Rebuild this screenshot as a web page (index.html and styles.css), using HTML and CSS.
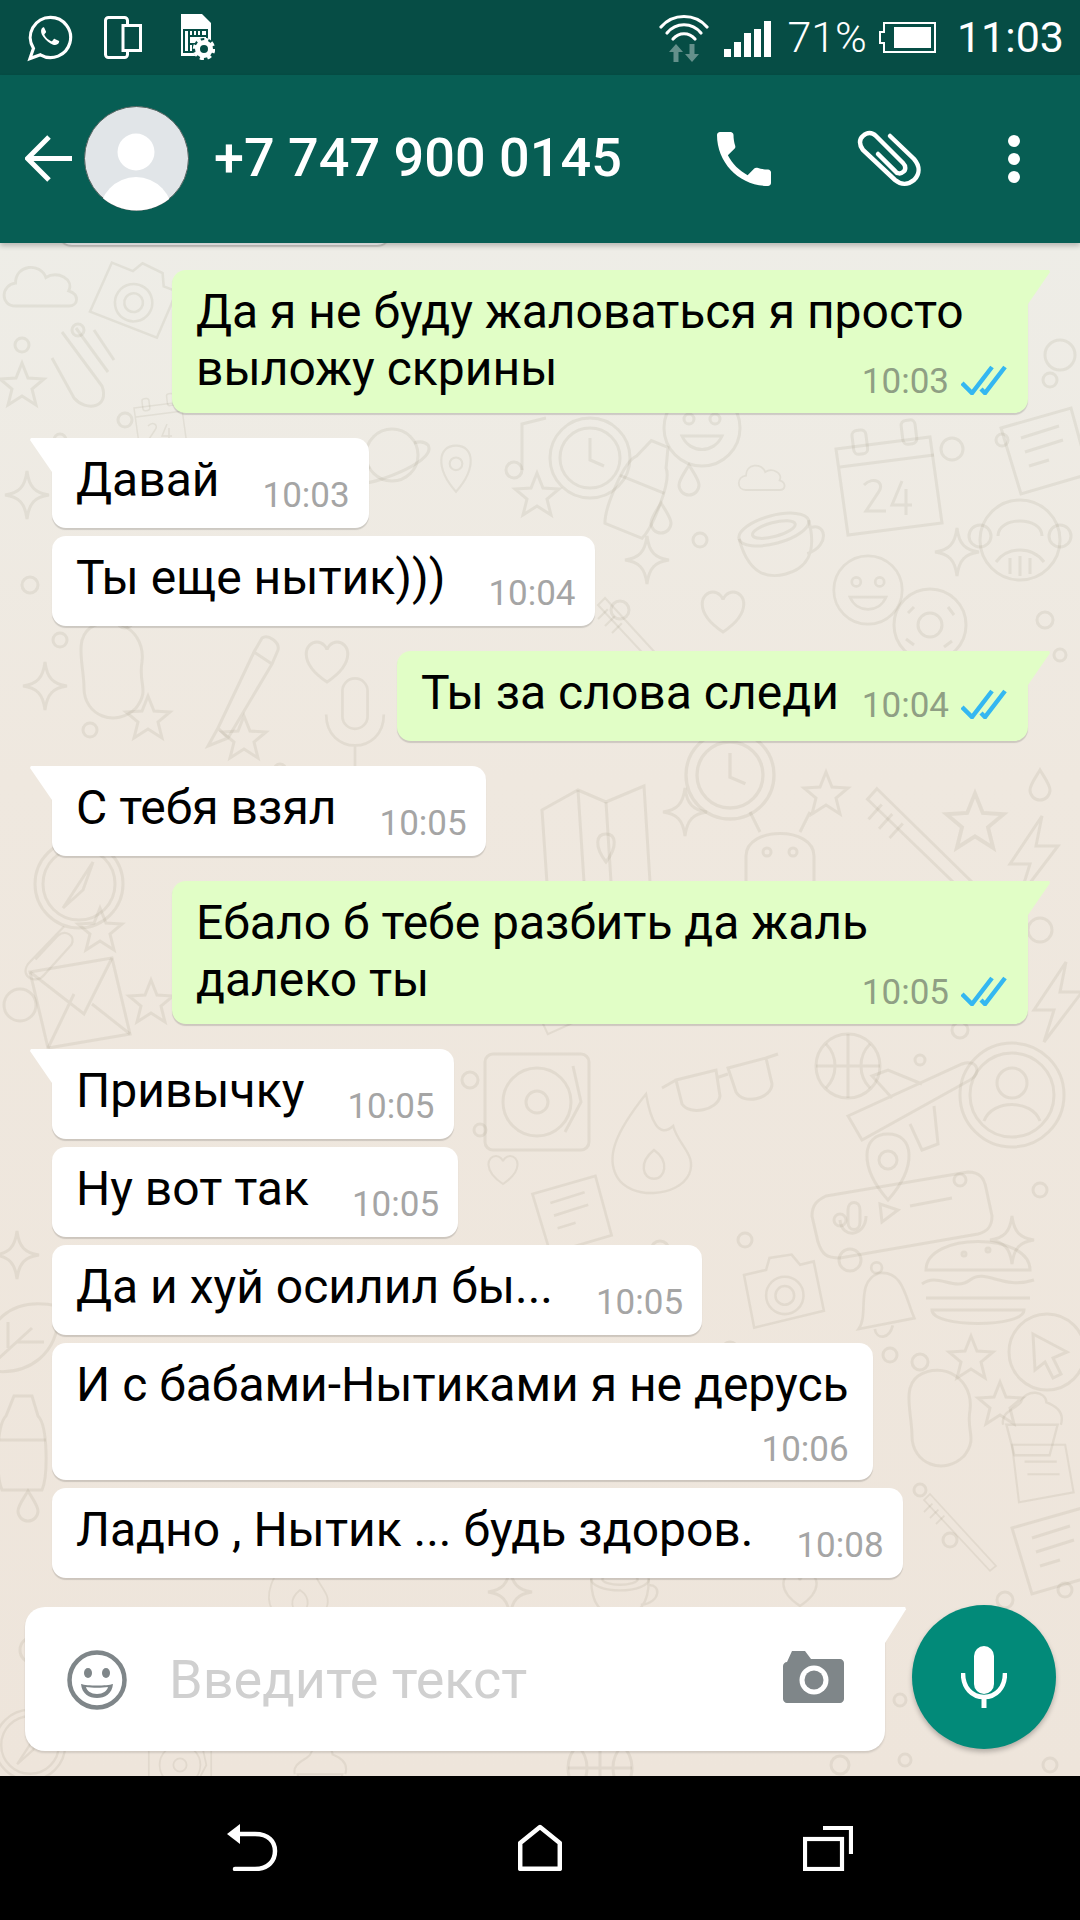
FILE: index.html
```html
<!DOCTYPE html>
<html lang="ru">
<head>
    <meta charset="UTF-8">
    <title>WhatsApp</title>
    <link rel="stylesheet" href="styles.css">
</head>
<body>
<div class="screen">

    <!-- status bar -->
    <div class="statusbar">
        <svg class="st-whatsapp" viewBox="0 0 48 48">
            <path d="M24 3a20.5 20.5 0 1 1-10.3 38.2L3 45l3.6-10.4A20.5 20.5 0 0 1 24 3z" fill="none" stroke="#fff" stroke-width="3.2"/>
            <path d="M17 13c-.7 0-1.6.5-2.2 1.7-.9 1.8-.6 4.6 1.8 7.9 3 4 6.6 7 10 8.2 2.7.9 5-.1 5.9-1.9.4-.9.4-1.5.3-1.8l-4.4-2.2c-.4-.2-.7-.1-1 .2l-1.6 2c-.3.3-.6.4-1 .2-3-1.3-5.5-3.4-7-6.3-.2-.4-.1-.7.2-1l1.3-1.6c.2-.3.3-.6.1-1l-1.9-4.1c-.2-.3-.4-.3-1-.3z" fill="#fff"/>
        </svg>
        <svg class="st-phones" viewBox="0 0 38 43">
            <rect x="1.5" y="1.5" width="22" height="40" rx="3" fill="none" stroke="#fff" stroke-width="3"/>
            <rect x="19" y="9.5" width="17.500" height="25" fill="#064d45" stroke="#fff" stroke-width="3"/>
        </svg>
        <svg class="st-sim" viewBox="0 0 36 46">
            <path d="M2 0h21l9 9v33H2z" fill="#fff"/>
            <path d="M5 16h23v22H5z" fill="none" stroke="#064d45" stroke-width="2"/>
            <path d="M10 16v22M10 22h18M14 16v6M18 16v6M22 16v6M10 30h8M14 30v8" stroke="#064d45" stroke-width="2" fill="none"/>
            <circle cx="25" cy="35" r="11" fill="#064d45"/>
            <circle cx="25" cy="35" r="6.500" fill="none" stroke="#fff" stroke-width="5"/>
            <circle cx="25" cy="35" r="9.500" fill="none" stroke="#fff" stroke-width="3.500" stroke-dasharray="4 3.460"/>
        </svg>
        <div class="st-right">
            <svg class="st-wifi" viewBox="0 0 50 50">
                <g fill="none" stroke="#fff" stroke-width="3.200" stroke-linecap="round">
                    <path d="M2 14C14 0 36 0 48 14"/>
                    <path d="M8 20C17 9 33 9 42 20"/>
                    <path d="M14 26C20 19 30 19 36 26"/>
                </g>
                <path d="M17 31l7 8h-4.500v10h-5V39H10zM33 49l7-8h-4.500V31h-5v10H26z" fill="#fff" opacity=".38"/>
            </svg>
            <svg class="st-signal" viewBox="0 0 47 36">
                <rect x="0" y="28" width="7" height="8" fill="#fff"/>
                <rect x="10" y="21" width="7" height="15" fill="#fff"/>
                <rect x="20" y="12" width="7" height="24" fill="#fff"/>
                <rect x="30" y="8" width="7" height="28" fill="#fff"/>
                <rect x="40" y="0" width="7" height="36" fill="#fff"/>
            </svg>
            <span class="st-percent">71%</span>
            <svg class="st-battery" viewBox="0 0 57 31">
                <path d="M5 1h51v29H5v-9H1V10h4z" fill="none" stroke="#fff" stroke-width="2"/>
                <rect x="15" y="5" width="37" height="21" fill="#fff"/>
            </svg>
            <span class="st-time">11:03</span>
        </div>
    </div>

    <!-- app bar -->
    <div class="appbar">
        <svg class="back-icon" viewBox="0 0 47 47">
            <path d="M47 23.500H4M24 2L2.500 23.500 24 45" fill="none" stroke="#fff" stroke-width="5"/>
        </svg>
        <svg class="avatar" viewBox="0 0 105 105">
            <clipPath id="avatarClip"><circle cx="52.500" cy="52.500" r="52"/></clipPath>
            <circle cx="52.500" cy="52.500" r="52" fill="#e1e5e8" stroke="#4f5f5c" stroke-width="1"/>
            <g clip-path="url(#avatarClip)" fill="#fff">
                <circle cx="52" cy="46" r="18.500"/>
                <ellipse cx="52" cy="109" rx="37" ry="38"/>
            </g>
        </svg>
        <h1 class="contact">+7 747 900 0145</h1>
        <svg class="call-icon" viewBox="0 0 24 24">
            <path fill="#fff" d="M6.620 10.790c1.440 2.830 3.760 5.140 6.590 6.590l2.200-2.200c.27-.27.67-.36 1.020-.24 1.120.37 2.330.57 3.570.57.55 0 1 .45 1 1V20c0 .55-.45 1-1 1-9.390 0-17-7.610-17-17 0-.55.45-1 1-1h3.500c.55 0 1 .45 1 1 0 1.250.2 2.450.57 3.570.11.35.03.74-.25 1.020l-2.200 2.200z"/>
        </svg>
        <svg class="clip-icon" viewBox="0 0 64 58">
            <path d="M33 6l24 23c6 7 6 15 0 21-6 5-13 5-19 0L6 20C2 15 2 9 6 6c4-4 9-4 13 0l27 27c3 3 3 7 0 9-2 2-6 2-8-1L21 24" fill="none" stroke="#fff" stroke-width="4.500" stroke-linecap="round"/>
        </svg>
        <div class="dots"><i></i><i></i><i></i></div>
    </div>

    <!-- chat -->
    <div class="chat">
        <svg class="wallpaper" viewBox="0 243 1080 1533">
            <defs>
                <path id="d-star" d="M0-22L6-7 22-6 10 4 14 20 0 11-14 20-10 4-22-6-6-7z"/>
                <path id="d-spark" d="M0-24C2-8 8-2 22 0 8 2 2 8 0 24-2 8-8 2-22 0-8-2-2-8 0-24z"/>
                <path id="d-heart" d="M0 20C-30 0-22-20-10-20-4-20 0-14 0-12 0-14 4-20 10-20 22-20 30 0 0 20z"/>
                <path id="d-drop" d="M0-15C6-5 10 0 10 5A10 10 0 0 1-10 5C-10 0-6-5 0-15z"/>
                <path id="d-cloud" d="M-30 20C-46 20-46-2-30-4-30-24-4-26 2-10 14-18 32-8 26 4 38 8 36 20 26 20z"/>
                <g id="d-face"><circle r="38"/><circle cx="-13" cy="-9" r="5"/><circle cx="13" cy="-9" r="5"/><path d="M-20 8C-12 26 12 26 20 8z"/></g>
                <g id="d-clock"><circle r="40"/><circle r="30"/><path d="M0-20V2L14 8"/></g>
                <g id="d-vinyl"><rect x="-52" y="-48" width="104" height="96" rx="8"/><circle r="34"/><circle r="11"/><path d="M36-36L44 0 28 30"/></g>
                <g id="d-calendar"><path d="M-52-34L42-46 54 40-40 52z"/><path d="M-48-16L46-28"/><rect x="-30" y="-56" width="14" height="24" rx="5" transform="rotate(-7)"/><rect x="20" y="-60" width="14" height="24" rx="5" transform="rotate(-7)"/><path d="M-24 2C-14-8-2 0-10 10L-22 28H-2M14-2L4 22H24M18 6V32"/></g>
                <g id="d-cup"><ellipse cx="0" cy="-16" rx="36" ry="14"/><path d="M-36-16C-36 20-20 30 0 30S36 20 36-16M34-8C52-12 52 14 26 16"/><ellipse cx="0" cy="-16" rx="22" ry="7"/></g>
                <g id="d-monkey"><circle r="40"/><circle cx="-40" cy="-4" r="11"/><circle cx="40" cy="-4" r="11"/><path d="M-22-4C-22-24 22-24 22-4M-24 22C-12 6 12 6 24 22M-10 18V34M0 16V36M10 18V34"/></g>
                <g id="d-pencil"><path d="M-16 40L-26 58-6 50 38-24 20-36zM20-36L28-50C34-54 46-46 44-38L38-24M-16 40L-6 50"/></g>
                <g id="d-mic"><rect x="-14" y="-44" width="28" height="56" rx="14"/><path d="M-32-4C-32 42 32 42 32-4M0 32V60M-18 60H18"/></g>
                <g id="d-map"><path d="M-50-28L-14-48 14-36 52-52 58 44 20 60-8 44-44 60z"/><path d="M-14-48L-8 44M14-36L20 60"/><path d="M14 24C2 8 4-4 14-4S26 8 14 24z"/></g>
                <g id="d-android"><path d="M-34 26V0C-34-30 34-30 34 0V26C34 36 26 40 20 40H-20C-26 40-34 36-34 26zM-20-24L-30-44M20-24L30-44"/><circle cx="-13" cy="-4" r="4"/><circle cx="13" cy="-4" r="4"/></g>
                <g id="d-brush"><path d="M-50-60L60 60 50 68-60-50z"/><path d="M-46-44L-60-30M-36-34L-50-20M-26-24L-40-10"/></g>
                <g id="d-compass"><circle r="44"/><circle r="36"/><path d="M14-22L-16 24 4 6z"/></g>
                <g id="d-envelope"><path d="M-50-30L32-44 50 32-32 46z"/><path d="M-50-30L4 12 32-44M-32 46L-6-8M50 32L12 2"/></g>
                <g id="d-paperclip"><path d="M24-34L-24 16C-36 34-12 44-2 30L34-10C40-22 26-30 16-22L-14 10"/></g>
                <g id="d-glasses"><path d="M-46-12L-6-22-2 4C-4 18-32 24-40 12zM6-24L44-34 50-8C50 6 22 14 14 0zM-6-14L6-18M-46-12L-60-4M44-34L56-38"/></g>
                <g id="d-ball"><circle r="32"/><path d="M-32 0H32M0-32V32M-22-22C-10-10-10 10-22 22M22-22C10-10 10 10 22 22"/></g>
                <g id="d-plane"><path d="M-64 16L50-36C66-42 70-26 58-20L-50 40zM-20-2L-40-24-24-30 10-16M-2 24L10 50 26 44 22 6"/></g>
                <g id="d-person"><circle r="52"/><circle r="42"/><circle cy="-12" r="15"/><path d="M-28 26C-20 4 20 4 28 26"/></g>
                <g id="d-flame"><path d="M-10-70C-50-20-60 10-46 34-30 62 30 60 44 30 54 6 30-6 24-30 6-14-4-36-10-70z"/><path d="M0 0C-20 16-14 36 0 36S20 14 0 0z"/></g>
                <g id="d-pin"><path d="M0 34C-30 0-26-32 0-32S30 0 0 34z"/><circle cy="-6" r="9"/></g>
                <g id="d-card"><path d="M-44-20L26-40 44 26-24 46z"/><path d="M-24-10L14-22M-20 4L18-8M-16 18L4 12"/></g>
                <g id="d-voice"><path d="M-76-26L66-50C78-50 82-44 84-34L90-6C90 6 84 10 76 12L-62 36C-76 36-80 32-84 20L-90-6C-90-18-84-22-76-26z"/><path d="M-54-12C-54-22-42-22-42-12V0C-42 10-54 10-54 0zM-62-2C-60 18-36 14-36-6M-22-18L-4-12-20 0zM8-16L50-24"/></g>
                <g id="d-camera"><path d="M-40-20L-14-26-10-40 16-44 26-32 42-36 54 22-28 42z"/><circle cx="8" cy="4" r="22"/><circle cx="8" cy="4" r="11"/></g>
                <g id="d-burger"><path d="M-52-8C-52-46 52-46 52-8z"/><path d="M-56 6C-40-6-24 14-8 2S24 12 56 2M-52 20H52M-46 32C-46 50 46 50 46 32z"/><circle cx="-14" cy="-24" r="2"/><circle cx="10" cy="-28" r="2"/></g>
                <g id="d-bell"><path d="M-26 30C-14 14-30-22 -4-32 24-36 26-4 36 18z"/><circle cx="-6" cy="-38" r="6"/><path d="M-8 30C-6 42 8 42 12 26"/></g>
                <g id="d-cursor"><circle r="38"/><path d="M-14-18L20 0 6 6 14 22 6 26-2 10-12 18z"/></g>
                <g id="d-cake"><path d="M-32 6H32L22 44H-22zM-36 6C-40-10-20-14-14-22-8-40 18-36 18-22 34-16 40-6 36 6"/></g>
                <g id="d-blob"><path d="M-30-44C-4-60 26-40 22-10 18 12 30 18 16 36-4 56-36 44-36 16-36-6-46-32-30-44z"/></g>
                <g id="d-bottle"><path d="M-16-30L-8-50H10L16-30C26-20 26 30 20 44H-20C-26 30-26-20-16-30z"/><path d="M-24-6H24"/></g>
                <g id="d-leaf"><path d="M-36 30C-40-20-10-44 36-34 40 14 6 38-36 30zM-36 30L10-12M-14 8V-18M-6 2H22"/></g>
                <g id="d-bolt"><path d="M8-40L-24 8H-4L-14 40 24-10H2z"/></g>
                <g id="d-planet"><circle r="26"/><path d="M-22 12C-44 24-40 34-10 24S42 0 36-10C32-14 28-14 22-12"/></g>
                <g id="d-note"><path d="M-8 22V-24L16-30"/><circle cx="-16" cy="22" r="8"/></g>
                <g id="d-donut"><circle r="36"/><circle r="12"/><path d="M-22-12L-16-18M18-18L24-10M-24 14L-16 20M14 22L22 16"/></g>
                <g id="d-sticky"><path d="M-40-36H36L48 32-30 46z"/><path d="M-22-12H24M-18 6H28"/></g>
                <g id="d-hand"><path d="M-24-36L16 18C24 40 0 44-12 30L-34-10M-10-40L22 4M8-38L28-8"/></g>
            </defs>
            <g class="doodles">
                <use href="#d-cloud" transform="translate(44 287) scale(.95)"/>
                <use href="#d-camera" transform="translate(130 296) rotate(35) scale(.85)"/>
                <use href="#d-hand" transform="translate(86 368)"/>
                <use href="#d-star" transform="translate(22 385)"/>
                <use href="#d-calendar" transform="translate(160 425) scale(.5)"/>
                <use href="#d-planet" transform="translate(392 455)"/>
                <use href="#d-note" transform="translate(530 448)"/>
                <use href="#d-clock" transform="translate(590 458)"/>
                <use href="#d-pin" transform="translate(456 468) scale(.7)"/>
                <use href="#d-face" transform="translate(702 428)"/>
                <use href="#d-calendar" transform="translate(888 483)"/>
                <use href="#d-card" transform="translate(1045 448)"/>
                <use href="#d-monkey" transform="translate(1020 540)"/>
                <use href="#d-cup" transform="translate(778 545) rotate(-15)"/>
                <use href="#d-spark" transform="translate(647 560)"/>
                <use href="#d-spark" transform="translate(957 552)"/>
                <use href="#d-star" transform="translate(537 495)"/>
                <use href="#d-bottle" transform="translate(640 490) rotate(22)"/>
                <use href="#d-face" transform="translate(868 590) scale(.9)"/>
                <use href="#d-donut" transform="translate(930 625)"/>
                <use href="#d-drop" transform="translate(689 480)"/>
                <use href="#d-drop" transform="translate(661 518)"/>
                <use href="#d-cloud" transform="translate(764 478) scale(.6)"/>
                <use href="#d-spark" transform="translate(27 495)"/>
                <use href="#d-heart" transform="translate(723 612)"/>
                <use href="#d-brush" transform="translate(640 640) scale(.7)"/>
                <use href="#d-blob" transform="translate(120 672)"/>
                <use href="#d-spark" transform="translate(45 686)"/>
                <use href="#d-pencil" transform="translate(234 688)"/>
                <use href="#d-heart" transform="translate(327 662)"/>
                <use href="#d-star" transform="translate(148 718)"/>
                <use href="#d-star" transform="translate(244 738)"/>
                <use href="#d-mic" transform="translate(355 718) scale(.9)"/>
                <use href="#d-clock" transform="translate(730 775) scale(1.1)"/>
                <use href="#d-map" transform="translate(592 838)"/>
                <use href="#d-android" transform="translate(780 856)"/>
                <use href="#d-brush" transform="translate(930 846) rotate(-3)"/>
                <use href="#d-star" transform="translate(975 822) scale(1.3)"/>
                <use href="#d-spark" transform="translate(685 812)"/>
                <use href="#d-star" transform="translate(826 794)"/>
                <use href="#d-compass" transform="translate(79 884)"/>
                <use href="#d-paperclip" transform="translate(46 952) scale(.75)"/>
                <use href="#d-star" transform="translate(100 930)"/>
                <use href="#d-envelope" transform="translate(80 1002)"/>
                <use href="#d-star" transform="translate(151 1002)"/>
                <use href="#d-bolt" transform="translate(1034 856)"/>
                <use href="#d-bolt" transform="translate(1058 1002)"/>
                <use href="#d-drop" transform="translate(1040 785)"/>
                <use href="#d-card" transform="translate(560 1000) rotate(-8) scale(.7)"/>
                <use href="#d-vinyl" transform="translate(537 1102)"/>
                <use href="#d-glasses" transform="translate(722 1092)"/>
                <use href="#d-ball" transform="translate(848 1066)"/>
                <use href="#d-plane" transform="translate(912 1100)"/>
                <use href="#d-person" transform="translate(1012 1095)"/>
                <use href="#d-flame" transform="translate(654 1150) scale(.8)"/>
                <use href="#d-pin" transform="translate(888 1166)"/>
                <use href="#d-heart" transform="translate(503 1170) scale(.7)"/>
                <use href="#d-card" transform="translate(572 1212) scale(.9)"/>
                <use href="#d-voice" transform="translate(902 1222)"/>
                <use href="#d-spark" transform="translate(1012 1240)"/>
                <use href="#d-camera" transform="translate(778 1292) scale(.85)"/>
                <use href="#d-burger" transform="translate(978 1278)"/>
                <use href="#d-bell" transform="translate(882 1302) scale(.9)"/>
                <use href="#d-cursor" transform="translate(1047 1352)"/>
                <use href="#d-star" transform="translate(971 1358)"/>
                <use href="#d-cake" transform="translate(1032 1420) scale(.8)"/>
                <use href="#d-star" transform="translate(1000 1404)"/>
                <use href="#d-blob" transform="translate(948 1420)"/>
                <use href="#d-sticky" transform="translate(1040 1470) scale(.7)"/>
                <use href="#d-card" transform="translate(1056 1548)"/>
                <use href="#d-leaf" transform="translate(22 1340)"/>
                <use href="#d-spark" transform="translate(17 1255)"/>
                <use href="#d-bottle" transform="translate(22 1446)"/>
                <use href="#d-drop" transform="translate(28 1506)"/>
                <use href="#d-brush" transform="translate(960 1530) scale(.6)"/>
                <use href="#d-spark" transform="translate(510 1592)"/>
                <use href="#d-cup" transform="translate(620 1592) scale(.8)"/>
                <use href="#d-flame" transform="translate(300 1590) scale(.6)"/>
                <use href="#d-heart" transform="translate(800 1590) scale(.8)"/>
                <use href="#d-compass" transform="translate(30 1745) scale(.8)"/>
                <use href="#d-vinyl" transform="translate(180 1765) scale(.6)"/>
                <use href="#d-ball" transform="translate(600 1768)"/>
                <use href="#d-cake" transform="translate(320 1770) scale(.7)"/>
                <circle cx="22" cy="345" r="7"/><circle cx="78" cy="330" r="6"/><circle cx="125" cy="420" r="7"/><circle cx="60" cy="440" r="6"/>
                <circle cx="955" cy="400" r="6"/><circle cx="1050" cy="380" r="7"/><circle cx="1003" cy="360" r="5"/><circle cx="1060" cy="355" r="15"/>
                <circle cx="952" cy="449" r="11"/><circle cx="1002" cy="440" r="6"/><circle cx="1045" cy="620" r="8"/><circle cx="1060" cy="655" r="6"/>
                <circle cx="620" cy="610" r="9"/><circle cx="440" cy="560" r="7"/><circle cx="700" cy="540" r="7"/><circle cx="515" cy="590" r="10"/>
                <circle cx="30" cy="585" r="8"/><circle cx="125" cy="620" r="8"/><circle cx="210" cy="590" r="7"/><circle cx="60" cy="640" r="7"/>
                <circle cx="90" cy="730" r="7"/><circle cx="280" cy="770" r="6"/><circle cx="190" cy="780" r="12"/><circle cx="20" cy="1005" r="16"/>
                <circle cx="605" cy="938" r="6"/><circle cx="660" cy="932" r="6"/><circle cx="800" cy="940" r="10"/><circle cx="875" cy="985" r="6"/>
                <circle cx="920" cy="1060" r="5"/><circle cx="960" cy="1030" r="8"/><circle cx="1040" cy="930" r="12"/><circle cx="1000" cy="1000" r="7"/>
                <circle cx="470" cy="1080" r="8"/><circle cx="480" cy="1130" r="6"/><circle cx="660" cy="1250" r="9"/><circle cx="745" cy="1240" r="7"/>
                <circle cx="840" cy="1220" r="6"/><circle cx="850" cy="1260" r="11"/><circle cx="1040" cy="1190" r="7"/><circle cx="960" cy="1180" r="6"/>
                <circle cx="730" cy="1350" r="8"/><circle cx="780" cy="1370" r="6"/><circle cx="890" cy="1355" r="7"/><circle cx="920" cy="1362" r="8"/>
                <circle cx="950" cy="1540" r="7"/><circle cx="880" cy="1530" r="10"/><circle cx="920" cy="1490" r="6"/><circle cx="1065" cy="1590" r="7"/>
                <circle cx="33" cy="1650" r="13"/><circle cx="45" cy="1688" r="10"/><circle cx="900" cy="1700" r="6"/><circle cx="1005" cy="1600" r="8"/>
                <circle cx="1050" cy="1765" r="7"/><circle cx="840" cy="1765" r="9"/><circle cx="905" cy="1760" r="6"/>
            </g>
        </svg>

        <div class="messages">
            <div class="bubble in stub"></div>

            <div class="bubble out long group-start">
                <p class="text">Да я не буду жаловаться я просто<br>выложу скрины</p>
                <div class="meta overlap"><span class="time">10:03</span><svg class="ticks" viewBox="0 0 46 30"><path d="M1 18l10 10L31 2M20 24l4 4L44 2"/></svg></div>
            </div>

            <div class="bubble in tail group-start">
                <p class="text">Давай</p><div class="meta"><span class="time">10:03</span></div>
            </div>
            <div class="bubble in">
                <p class="text">Ты еще нытик)))</p><div class="meta"><span class="time">10:04</span></div>
            </div>

            <div class="bubble out group-start">
                <p class="text">Ты за слова следи</p>
                <div class="meta"><span class="time">10:04</span><svg class="ticks" viewBox="0 0 46 30"><path d="M1 18l10 10L31 2M20 24l4 4L44 2"/></svg></div>
            </div>

            <div class="bubble in tail group-start">
                <p class="text">С тебя взял</p><div class="meta"><span class="time">10:05</span></div>
            </div>

            <div class="bubble out long group-start">
                <p class="text">Ебало б тебе разбить да жаль<br>далеко ты</p>
                <div class="meta overlap"><span class="time">10:05</span><svg class="ticks" viewBox="0 0 46 30"><path d="M1 18l10 10L31 2M20 24l4 4L44 2"/></svg></div>
            </div>

            <div class="bubble in tail group-start">
                <p class="text">Привычку</p><div class="meta"><span class="time">10:05</span></div>
            </div>
            <div class="bubble in">
                <p class="text">Ну вот так</p><div class="meta"><span class="time">10:05</span></div>
            </div>
            <div class="bubble in">
                <p class="text">Да и хуй осилил бы...</p><div class="meta"><span class="time">10:05</span></div>
            </div>
            <div class="bubble in stacked">
                <p class="text">И с бабами-Нытиками я не дерусь</p><div class="meta"><span class="time">10:06</span></div>
            </div>
            <div class="bubble in">
                <p class="text">Ладно , Нытик ... будь здоров.</p><div class="meta"><span class="time">10:08</span></div>
            </div>
        </div>

        <div class="input-row">
            <div class="composer">
                <svg class="emoji-icon" viewBox="0 0 60 60">
                    <circle cx="30" cy="30" r="27.500" fill="none" stroke="#7f8689" stroke-width="4.500"/>
                    <ellipse cx="21" cy="23" rx="4" ry="5" fill="#7f8689"/>
                    <ellipse cx="39" cy="23" rx="4" ry="5" fill="#7f8689"/>
                    <path d="M14 34c6 2 26 2 32 0-1 10-8 14-16 14s-15-4-16-14z" fill="#7f8689"/>
                    <path d="M19 37c6 1 16 1 22 0-1 4-5 7-11 7s-10-3-11-7z" fill="#fff"/>
                </svg>
                <span class="placeholder">Введите текст</span>
                <svg class="camera-icon" viewBox="0 0 61 53">
                    <path d="M4 12L9 1h13l6 8h29c2 0 4 2 4 4v36c0 2-2 4-4 4H4c-2 0-4-2-4-4V16c0-2 2-4 4-4z" fill="#7f8689"/>
                    <circle cx="31" cy="30" r="14.500" fill="#fff"/>
                    <circle cx="31" cy="30" r="9.500" fill="#7f8689"/>
                </svg>
            </div>
            <div class="mic-button">
                <svg class="mic-icon" viewBox="0 0 46 62">
                    <rect x="13" y="0" width="20" height="48" rx="10" fill="#fff"/>
                    <path d="M2 27c0 15 9 24 21 24s21-9 21-24" fill="none" stroke="#fff" stroke-width="4.500"/>
                    <path d="M23 50v12" stroke="#fff" stroke-width="5"/>
                </svg>
            </div>
        </div>
    </div>

    <!-- nav bar -->
    <div class="navbar">
        <svg class="nav-back" viewBox="0 0 51 47">
            <path d="M0 10L13 0v20z" fill="#fff"/>
            <path d="M10 10h18c14 0 20 8 20 17s-6 18-20 18H8" fill="none" stroke="#fff" stroke-width="4.500" stroke-linecap="round"/>
        </svg>
        <svg class="nav-home" viewBox="0 0 44 47">
            <path d="M2.200 44.800V19L22 3l19.800 16v25.800z" fill="none" stroke="#fff" stroke-width="4.500" stroke-linejoin="round"/>
        </svg>
        <svg class="nav-recents" viewBox="0 0 50 47">
            <rect x="2" y="15" width="37" height="30" fill="none" stroke="#fff" stroke-width="4.200"/>
            <path d="M20 4h28v26" fill="none" stroke="#fff" stroke-width="4.200"/>
        </svg>
    </div>
</div>
</body>
</html>
```

FILE: styles.css
```css
* {
    margin: 0;
    padding: 0;
    box-sizing: border-box;
}

body {
    width: 1080px;
    height: 1920px;
    overflow: hidden;
    font-family: Roboto, "Liberation Sans", sans-serif;
    background-color: #000;
}

svg {
    display: block;
    flex: none;
}

.screen {
    display: flex;
    flex-direction: column;
    height: 1920px;
}

/* status bar */
.statusbar {
    display: flex;
    align-items: center;
    flex: none;
    height: 75px;
    padding-left: 27px;
    background-color: #064d45;
    color: #fff;
}

.st-whatsapp { width: 47px; height: 48px; }
.st-phones { width: 38px; height: 43px; margin-left: 30px; margin-top: -1px; }
.st-sim { width: 36px; height: 46px; margin-left: 37px; margin-top: -1px; }

.st-right {
    display: flex;
    align-items: center;
    margin-left: auto;
    padding-right: 16px;
}

.st-wifi { width: 50px; height: 50px; }
.st-signal { width: 47px; height: 36px; margin-left: 15px; margin-top: 2px; }

.st-percent {
    margin-left: 16px;
    font-size: 43px;
    font-weight: 300;
    line-height: 75px;
}

.st-battery { width: 57px; height: 31px; margin-left: 12px; }

.st-time {
    margin-left: 21px;
    font-size: 43px;
    font-weight: 400;
    line-height: 75px;
}

/* app bar */
.appbar {
    position: relative;
    z-index: 2;
    display: flex;
    align-items: center;
    flex: none;
    height: 168px;
    padding-left: 25px;
    background-color: #075e54;
    box-shadow: 0 3px 5px rgba(0, 0, 0, 0.22);
}

.back-icon { width: 47px; height: 47px; margin-top: -1px; }
.avatar { width: 105px; height: 105px; margin-left: 12px; margin-top: -1px; }

.contact {
    margin-left: 25px;
    margin-top: -4px;
    font-size: 54px;
    font-weight: 500;
    color: #fff;
    white-space: nowrap;
}

.call-icon { width: 72px; height: 72px; margin-left: auto; }
.clip-icon { width: 64px; height: 58px; margin-left: 77px; }

.dots {
    display: flex;
    flex-direction: column;
    gap: 6px;
    margin-left: 87px;
    margin-right: 60px;
}

.dots i {
    display: block;
    width: 12px;
    height: 12px;
    border-radius: 50%;
    background-color: #fff;
}

/* chat */
.chat {
    position: relative;
    display: flex;
    flex-direction: column;
    flex: 1;
    min-height: 0;
    overflow: hidden;
    background: linear-gradient(#eeede7 0, #efe8df 35%, #eee5db 100%);
}

.wallpaper {
    position: absolute;
    inset: 0;
    width: 1080px;
    height: 1533px;
}

.doodles {
    fill: none;
    stroke: #7d735f;
    stroke-opacity: 0.11;
    stroke-width: 3;
}

.messages {
    position: relative;
    display: flex;
    flex-direction: column;
    flex: 1;
    min-height: 0;
    padding: 0 52px;
    gap: 8px;
}

.bubble {
    position: relative;
    display: flex;
    align-items: flex-end;
    flex: none;
    width: fit-content;
    height: 90px;
    padding: 13px 19px 0 24px;
    border-radius: 14px;
    box-shadow: 0 2px 1px rgba(0, 0, 0, 0.14);
}

.bubble.in {
    align-self: flex-start;
    background-color: #fff;
}

.bubble.out {
    align-self: flex-end;
    padding-right: 21px;
    background-color: #e1fec6;
    border-top-right-radius: 0;
}

.bubble.group-start { margin-top: 17px; }

.bubble.stub {
    width: 333px;
    margin-top: -88px;
    margin-left: 6px;
}

.bubble.long {
    display: block;
    width: 856px;
    height: 143px;
}

.bubble.stacked {
    flex-direction: column;
    height: 137px;
    padding-right: 24px;
}

.bubble.stacked .meta {
    align-self: flex-end;
    margin-top: 16px;
    margin-left: 0;
}

.bubble.in.tail { border-top-left-radius: 0; }

.bubble.in.tail::before,
.bubble.out::after {
    content: "";
    position: absolute;
    top: 0;
    width: 22px;
    height: 34px;
}

.bubble.in.tail::before {
    right: 100%;
    background-color: #fff;
    clip-path: polygon(100% 0, 4% 0, 0 6%, 100% 100%);
}

.bubble.out::after {
    left: 100%;
    background-color: #e1fec6;
    clip-path: polygon(0 0, 96% 0, 100% 6%, 0 100%);
}

.text {
    align-self: flex-start;
    font-size: 48px;
    line-height: 57px;
    color: #000;
    white-space: nowrap;
}

.meta {
    display: flex;
    align-items: center;
    margin-left: 43px;
    margin-bottom: 12px;
    line-height: 41px;
}

.bubble.out .meta {
    margin-left: 23px;
    margin-bottom: 15px;
}

.bubble.out .meta.overlap {
    justify-content: flex-end;
    margin-top: -36px;
    margin-bottom: 0;
}

.time {
    font-size: 35px;
    color: #a5a5a5;
}

.out .time { color: #8f9f84; }

.ticks {
    width: 46px;
    height: 30px;
    margin-left: 12px;
    margin-bottom: 4px;
    fill: none;
    stroke: #34b7f1;
    stroke-width: 4.5;
}

/* input row */
.input-row {
    position: relative;
    display: flex;
    align-items: flex-end;
    flex: none;
    padding: 0 24px 25px 25px;
}

.composer {
    position: relative;
    display: flex;
    align-items: center;
    width: 860px;
    height: 144px;
    padding-left: 42px;
    background-color: #fff;
    border-radius: 20px;
    border-top-right-radius: 0;
    box-shadow: 0 2px 2px rgba(0, 0, 0, 0.12);
}

.composer::after {
    content: "";
    position: absolute;
    top: 0;
    left: 100%;
    width: 21px;
    height: 36px;
    background-color: #fff;
    clip-path: polygon(0 0, 96% 0, 100% 6%, 0 100%);
}

.emoji-icon { width: 60px; height: 60px; margin-top: 2px; }

.placeholder {
    margin-left: 42px;
    font-size: 54px;
    color: #d0d0d0;
    white-space: nowrap;
}

.camera-icon { width: 61px; height: 53px; margin-left: auto; margin-right: 41px; margin-top: -6px; }

.mic-button {
    display: flex;
    align-items: center;
    justify-content: center;
    width: 144px;
    height: 144px;
    margin-left: 27px;
    margin-bottom: 2px;
    border-radius: 50%;
    background-color: #028a79;
    box-shadow: 0 3px 5px rgba(0, 0, 0, 0.25);
}

.mic-icon { width: 46px; height: 62px; }

/* nav bar */
.navbar {
    position: relative;
    flex: none;
    height: 144px;
    background-color: #000;
}

.navbar svg {
    position: absolute;
    top: 48px;
}

.nav-back { left: 227px; width: 51px; height: 47px; }
.nav-home { left: 518px; width: 44px; height: 47px; }
.nav-recents { left: 803px; width: 50px; height: 47px; }
```
